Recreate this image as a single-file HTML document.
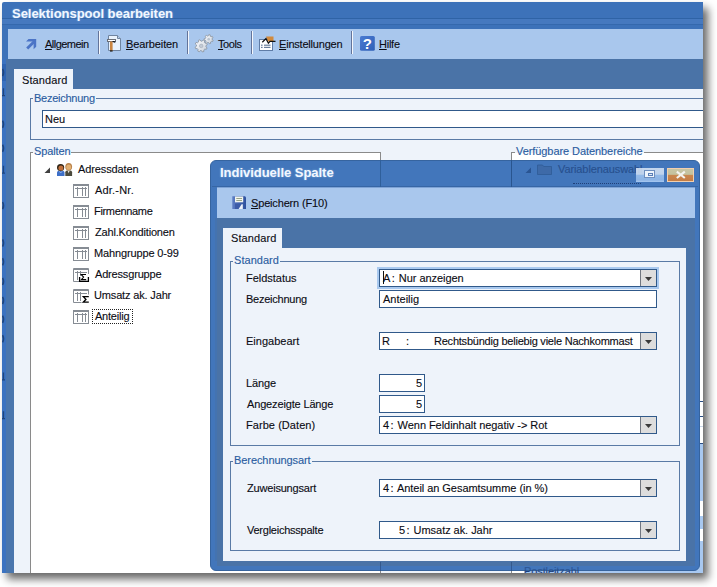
<!DOCTYPE html>
<html><head><meta charset="utf-8">
<style>
*{margin:0;padding:0;box-sizing:border-box}
html,body{width:717px;height:587px;overflow:hidden;background:#fff;position:relative}
body{font-family:"Liberation Sans",sans-serif;font-size:11px;color:#111}
.a{position:absolute}
.t{position:absolute;font:11px/13px "Liberation Sans",sans-serif;white-space:nowrap;color:#0c0c14;-webkit-text-stroke:0.12px currentColor}
.tb{position:absolute;font:bold 13px/15px "Liberation Sans",sans-serif;white-space:nowrap}
.gl{color:#2a5c9f}
.u{text-decoration:underline;text-underline-offset:1px}
.box{position:absolute;background:#fff;border:1px solid #30598a}
.dd{position:absolute;top:0;right:0;width:16px;height:16px;background:#dddddd;border-left:1px solid #707680}
.dd:after{content:"";position:absolute;left:4px;top:7px;width:7px;height:4px;background:#3a3a3a;clip-path:polygon(0 0,100% 0,50% 100%)}
.sep{position:absolute;top:31px;width:2px;height:23px;border-left:1px solid #63749a;border-right:1px solid #f4f7fc}
.lb{position:absolute;height:3px;background:#eef3fa}
</style></head><body>

<!-- main window shadow -->
<div class="a" style="left:2px;top:2px;width:701px;height:571px;background:#3d72b9;border-radius:2px 0 0 0;box-shadow:5px 6px 9px rgba(0,0,0,0.6)"></div>
<div class="a" style="left:0;top:0;width:703px;height:573px;overflow:hidden">
<!-- title band lines -->
<div class="a" style="left:2px;top:18px;width:701px;height:1px;background:#2f63a6"></div>
<div class="a" style="left:2px;top:19px;width:701px;height:5px;background:#4679bf"></div>
<div class="a" style="left:2px;top:24px;width:701px;height:1px;background:#3569ad"></div>

<!-- left strip -->
<div class="a" style="left:2px;top:59px;width:4px;height:514px;background:#3b72c0"></div>
<div class="a" style="left:6px;top:59px;width:8px;height:514px;background:#4a76ad"></div>

<svg class="a" style="left:0;top:0" width="8" height="573" viewBox="0 0 8 573"><rect x="2" y="64" width="4" height="17" fill="#2f64b2"/><path d="M2.6,68.9 Q4.6,72.5 2.6,76.1" stroke="#1f467f" stroke-width="1.5" fill="none"/><path d="M2.6,120.7 Q4.6,124.3 2.6,127.9" stroke="#1f467f" stroke-width="1.5" fill="none"/><path d="M2.6,144.6 Q4.6,148.2 2.6,151.8" stroke="#1f467f" stroke-width="1.5" fill="none"/><path d="M2.6,202.0 Q4.6,205.6 2.6,209.2" stroke="#1f467f" stroke-width="1.5" fill="none"/><path d="M2.6,239.4 Q4.6,243.0 2.6,246.6" stroke="#1f467f" stroke-width="1.5" fill="none"/><path d="M2.6,258.2 Q4.6,261.8 2.6,265.4" stroke="#1f467f" stroke-width="1.5" fill="none"/><path d="M2.6,277.8 Q4.6,281.4 2.6,285.0" stroke="#1f467f" stroke-width="1.5" fill="none"/><path d="M2.6,296.9 Q4.6,300.5 2.6,304.1" stroke="#1f467f" stroke-width="1.5" fill="none"/><path d="M2.6,315.6 Q4.6,319.2 2.6,322.8" stroke="#1f467f" stroke-width="1.5" fill="none"/><path d="M2.6,335.2 Q4.6,338.8 2.6,342.4" stroke="#1f467f" stroke-width="1.5" fill="none"/><path d="M3.5,88.2 V95.6 M2,95.6 H5" stroke="#1f467f" stroke-width="1.3" fill="none"/><path d="M3.5,165.7 V173.1 M2,173.1 H5" stroke="#1f467f" stroke-width="1.3" fill="none"/><path d="M3.5,372.5 V379.9 M2,379.9 H5" stroke="#1f467f" stroke-width="1.3" fill="none"/><path d="M3.5,411.2 V418.6 M2,418.6 H5" stroke="#1f467f" stroke-width="1.3" fill="none"/></svg>
<!-- toolbar -->
<div class="a" style="left:8px;top:29px;width:695px;height:30px;background:#a9c7ed"></div>
<!-- slate -->
<div class="a" style="left:6px;top:59px;width:697px;height:31px;background:#4a73a7"></div>

<!-- toolbar icons -->
<svg class="a" style="left:24px;top:36px" width="16" height="16" viewBox="24 36 16 16">
  <polygon points="26,41.5 28.5,39 36.2,39 36.2,46.8 33.6,49.2 33.6,41.6" fill="#4b74c6"/>
  <line x1="27.2" y1="48.6" x2="34.5" y2="41.2" stroke="#4b74c6" stroke-width="2.8"/>
</svg>
<div class="sep" style="left:98px"></div>
<svg class="a" style="left:104px;top:33px" width="20" height="20" viewBox="104 33 20 20">
  <path d="M108.5,35.5 H117.5 L120.5,38.5 V50.5 H108.5 Z" fill="#e9f2fc" stroke="#6f84a0" stroke-width="1"/>
  <path d="M117.5,35.5 V38.5 H120.5" fill="#bcd0e8" stroke="#6f84a0" stroke-width="1"/>
  <rect x="107.5" y="39.5" width="8" height="2" fill="#fff" stroke="#6b6f78" stroke-width="1"/>
  <rect x="110" y="41.5" width="2.6" height="9.5" fill="#c9843f"/>
  <path d="M112.6,41.8 q1.5,-0.8 2.6,0.6" stroke="#111" stroke-width="1.2" fill="none"/>
  <rect x="110" y="50.2" width="2.6" height="1.4" fill="#222"/>
</svg>
<div class="sep" style="left:187px"></div>
<svg class="a" style="left:192px;top:33px" width="22" height="20" viewBox="192 33 22 20">
  <defs><linearGradient id="gg" x1="0" y1="0" x2="1" y2="1"><stop offset="0" stop-color="#fbfcfe"/><stop offset="1" stop-color="#c9d0da"/></linearGradient></defs>
  <path d="M212.08,39.54 L213.17,40.27 L212.62,41.60 L211.34,41.35 L210.54,42.06 L210.65,43.36 L209.27,43.76 L208.67,42.60 L207.62,42.42 L206.66,43.32 L205.49,42.49 L206.02,41.29 L205.50,40.36 L204.21,40.18 L204.12,38.74 L205.39,38.41 L205.80,37.43 L205.13,36.30 L206.21,35.34 L207.26,36.12 L208.28,35.83 L208.75,34.60 L210.17,34.84 L210.21,36.15 L211.07,36.77 L212.33,36.37 L213.02,37.63 L212.02,38.48 Z" fill="url(#gg)" stroke="#8a939e" stroke-width="0.8"/>
  <circle cx="208.7" cy="39.2" r="1.3" fill="#b8c2ce"/>
  <path d="M205.90,46.85 L207.09,47.84 L206.34,49.36 L204.84,49.03 L203.85,49.90 L203.99,51.43 L202.39,51.99 L201.56,50.69 L200.25,50.60 L199.26,51.79 L197.74,51.04 L198.07,49.54 L197.20,48.55 L195.67,48.69 L195.11,47.09 L196.41,46.26 L196.50,44.95 L195.31,43.96 L196.06,42.44 L197.56,42.77 L198.55,41.90 L198.41,40.37 L200.01,39.81 L200.84,41.11 L202.15,41.20 L203.14,40.01 L204.66,40.76 L204.33,42.26 L205.20,43.25 L206.73,43.11 L207.29,44.71 L205.99,45.54 Z" fill="url(#gg)" stroke="#8a939e" stroke-width="0.8"/>
  <circle cx="201.2" cy="45.9" r="1.8" fill="#c2cad5" stroke="#9aa3ae" stroke-width="0.5"/>
</svg>
<div class="sep" style="left:251px"></div>
<svg class="a" style="left:257px;top:33px" width="20" height="20" viewBox="257 33 20 20">
  <rect x="259.5" y="39.5" width="13" height="11" fill="#fff" stroke="#5f7ca6" stroke-width="1"/>
  <rect x="261" y="44.6" width="1.6" height="1.2" fill="#6a7f9c"/><rect x="264" y="44.6" width="6.5" height="1.2" fill="#6a7f9c"/>
  <rect x="261" y="46.8" width="1.6" height="1.2" fill="#6a7f9c"/><rect x="264" y="46.8" width="6.5" height="1.2" fill="#6a7f9c"/>
  <path d="M266,36.5 H273.5 V41.5 H268 Z" fill="#d18a3e"/>
  <path d="M262.3,42.2 L266,38.6 L268.4,43.2 L270,41.4 H275.5" stroke="#111" stroke-width="1.2" fill="none"/>
</svg>
<div class="sep" style="left:351px"></div>
<svg class="a" style="left:359px;top:35px" width="17" height="17" viewBox="359 35 17 17">
  <defs><linearGradient id="hq" x1="0" y1="0" x2="1" y2="1"><stop offset="0" stop-color="#4a7bd2"/><stop offset="1" stop-color="#2f5fb6"/></linearGradient></defs><rect x="360" y="36" width="14.8" height="14.8" rx="1.5" fill="url(#hq)"/>
  <text x="367.4" y="48.9" font-family="Liberation Sans" font-weight="bold" font-size="15" fill="#fff" text-anchor="middle">?</text>
</svg>

<!-- main tab + content -->
<div class="a" style="left:14px;top:69px;width:59px;height:21px;background:#eef3fa"></div>
<div class="a" style="left:14px;top:89px;width:689px;height:484px;background:#eef3fa"></div>

<!-- Bezeichnung group -->
<div class="a" style="left:30px;top:98px;width:690px;height:42px;border:1px solid #5a7aa5;border-right:none"></div>
<div class="lb" style="left:33px;top:97px;width:63px"></div>
<div class="box" style="left:42px;top:110px;width:670px;height:18px"></div>

<!-- Spalten group -->
<div class="a" style="left:30px;top:152px;width:351px;height:430px;background:#fff;border:1px solid #8a8a8a"></div>
<div class="lb" style="left:33px;top:152px;width:38px;height:1px"></div>

<!-- Verfuegbare group -->
<div class="a" style="left:511px;top:152px;width:200px;height:430px;background:#fff;border:1px solid #8a8a8a;border-right:none"></div>
<div class="lb" style="left:515px;top:152px;width:129px;height:1px"></div>

<!-- tree -->
<svg class="a" style="left:43px;top:165px" width="9" height="9" viewBox="43 165 9 9"><polygon points="44.5,173 50,173 50,167.5" fill="#404040"/></svg>
<svg class="a" style="left:56px;top:162px" width="17" height="15" viewBox="56 162 17 15">
  <path d="M65.3,176 V172.3 Q65.3,170.3 68.7,170.3 Q72.1,170.3 72.1,172.3 V176 Z" fill="#4b4a3d"/>
  <path d="M67.6,170.6 L68.6,173.2 L69.8,170.6 Z" fill="#e8e8e0"/>
  <ellipse cx="68.7" cy="166.7" rx="3.4" ry="3.8" fill="#b9824a"/>
  <ellipse cx="68.7" cy="167.2" rx="2.4" ry="2.6" fill="#e2b173"/>
  <path d="M57,176 V172.6 Q57,170.6 60.7,170.6 Q64.5,170.6 64.5,172.6 V176 Z" fill="#3e6fc8"/>
  <path d="M59.3,171.2 L60.7,173 L62.2,171.2" stroke="#9cc0f0" stroke-width="0.8" fill="none"/>
  <ellipse cx="60.6" cy="167.4" rx="3.6" ry="3.5" fill="#2e2416"/>
  <ellipse cx="60.9" cy="168" rx="2.5" ry="2.6" fill="#c0703c"/>
</svg>
<svg class="a" style="left:73px;top:184px" width="17" height="15" viewBox="0 0 17 15"><rect x="0.5" y="0.5" width="15" height="13" fill="#fff" stroke="#868c94"/><rect x="1" y="1" width="14" height="1" fill="#868c94"/><path d="M2,4.5 H14 M4.5,3 V12 M9.5,3 V12 M12.5,3 V12" stroke="#868c94"/></svg>
<svg class="a" style="left:73px;top:205px" width="17" height="15" viewBox="0 0 17 15"><rect x="0.5" y="0.5" width="15" height="13" fill="#fff" stroke="#868c94"/><rect x="1" y="1" width="14" height="1" fill="#868c94"/><path d="M2,4.5 H14 M4.5,3 V12 M9.5,3 V12 M12.5,3 V12" stroke="#868c94"/></svg>
<svg class="a" style="left:73px;top:226px" width="17" height="15" viewBox="0 0 17 15"><rect x="0.5" y="0.5" width="15" height="13" fill="#fff" stroke="#868c94"/><rect x="1" y="1" width="14" height="1" fill="#868c94"/><path d="M2,4.5 H14 M4.5,3 V12 M9.5,3 V12 M12.5,3 V12" stroke="#868c94"/></svg>
<svg class="a" style="left:73px;top:247px" width="17" height="15" viewBox="0 0 17 15"><rect x="0.5" y="0.5" width="15" height="13" fill="#fff" stroke="#868c94"/><rect x="1" y="1" width="14" height="1" fill="#868c94"/><path d="M2,4.5 H14 M4.5,3 V12 M9.5,3 V12 M12.5,3 V12" stroke="#868c94"/></svg>
<svg class="a" style="left:73px;top:268px" width="17" height="15" viewBox="0 0 17 15"><rect x="0" y="0" width="16" height="14" fill="#fff"/><path d="M0.5,0.5 H15.5 V6 M0.5,0.5 V13.5 H6" stroke="#868c94" fill="none"/><rect x="1" y="1" width="14" height="1" fill="#868c94"/><path d="M2,4.5 H14 M4.5,3 V12 M7.5,3 V8" stroke="#868c94"/><path d="M6.6,9 V13.4 H15.4 V9" stroke="#000" stroke-width="1.3" fill="none"/><path d="M13,6.5 H8.2 L10.6,9.1 L8.4,11.6 H13.2" stroke="#000" stroke-width="1.1" fill="none"/></svg>
<svg class="a" style="left:73px;top:289px" width="17" height="15" viewBox="0 0 17 15"><rect x="0" y="0" width="16" height="14" fill="#fff"/><path d="M0.5,0.5 H15.5 V5.5 M0.5,0.5 V13.5 H8.5" stroke="#868c94" fill="none"/><rect x="1" y="1" width="14" height="1" fill="#868c94"/><path d="M2,4.5 H14 M4.5,3 V12 M7.5,3 V12" stroke="#868c94"/><path d="M15.8,7.6 H10.4 L12.9,10.4 L10.4,13.1 H15.8" stroke="#000" stroke-width="1.4" fill="none"/></svg>
<svg class="a" style="left:73px;top:310px" width="17" height="15" viewBox="0 0 17 15"><rect x="0.5" y="0.5" width="15" height="13" fill="#fff" stroke="#868c94"/><rect x="1" y="1" width="14" height="1" fill="#868c94"/><path d="M2,4.5 H14 M4.5,3 V12 M9.5,3 V12 M12.5,3 V12" stroke="#868c94"/></svg>
<div class="a" style="left:92px;top:309px;width:41px;height:15px;border:1px dotted #222"></div>

<div class="a" style="left:695px;top:401px;width:8px;height:1px;background:#2a4f86"></div>
<div class="a" style="left:695px;top:416px;width:8px;height:1px;background:#2a4f86"></div>
<div class="a" style="left:695px;top:426px;width:8px;height:1px;background:#c9d6e8"></div>
<div class="a" style="left:695px;top:443px;width:8px;height:1px;background:#2a4f86"></div>
<div class="a" style="left:695px;top:444px;width:8px;height:57px;background:#a8c8f0"></div>
<div class="a" style="left:695px;top:516px;width:8px;height:13px;background:#a8c8f0"></div>
<div class="a" style="left:695px;top:541px;width:8px;height:32px;background:#a8c8f0"></div>
<div class="a" style="left:524px;top:556px;width:179px;height:17px;background:#a8c8f0"></div>
<div class="t" style="left:524px;top:565px;color:#1b3f7c;letter-spacing:-0.1px">Postleitzahl</div>
<div class="tb" style="left:12px;top:6px;letter-spacing:-0.033px;color:#f2f7ff;text-shadow:0 0 2px rgba(190,230,255,.55)">Selektionspool bearbeiten</div>
<div class="t" style="left:45px;top:38px;letter-spacing:-0.537px;"><span class="u">A</span>llgemein</div>
<div class="t" style="left:126px;top:38px;letter-spacing:-0.111px;"><span class="u">B</span>earbeiten</div>
<div class="t" style="left:218px;top:38px;letter-spacing:-0.400px;"><span class="u">T</span>ools</div>
<div class="t" style="left:279px;top:38px;letter-spacing:-0.208px;"><span class="u">E</span>instellungen</div>
<div class="t" style="left:379px;top:38px;letter-spacing:-0.250px;"><span class="u">H</span>ilfe</div>
<div class="t" style="left:22px;top:74px;letter-spacing:0.100px;">Standard</div>
<div class="t gl" style="left:34px;top:92px;letter-spacing:-0.260px;">Bezeichnung</div>
<div class="t" style="left:45px;top:113px;letter-spacing:0.000px;">Neu</div>
<div class="t gl" style="left:34px;top:145px;letter-spacing:-0.117px;">Spalten</div>
<div class="t gl" style="left:516px;top:145px;letter-spacing:-0.074px;">Verfügbare Datenbereiche</div>
<div class="t" style="left:78px;top:163px;letter-spacing:-0.120px;">Adressdaten</div>
<div class="t" style="left:95px;top:184px;letter-spacing:0.200px;">Adr.-Nr.</div>
<div class="t" style="left:94px;top:205px;letter-spacing:-0.333px;">Firmenname</div>
<div class="t" style="left:95px;top:226px;letter-spacing:-0.180px;">Zahl.Konditionen</div>
<div class="t" style="left:94px;top:247px;letter-spacing:-0.136px;">Mahngruppe 0-99</div>
<div class="t" style="left:95px;top:268px;letter-spacing:-0.173px;">Adressgruppe</div>
<div class="t" style="left:94px;top:289px;letter-spacing:-0.157px;">Umsatz ak. Jahr</div>
<div class="t" style="left:95px;top:310px;letter-spacing:-0.214px;">Anteilig</div>
</div>

<!-- dialog -->
<div class="a" style="left:210px;top:160px;width:490px;height:411px;background:#4276bb;border-radius:6px;border:1px solid #36649f"></div>
<div class="a" style="left:215px;top:218px;width:2px;height:343px;background:#4473b0"></div>
<div class="a" style="left:212px;top:186px;width:486px;height:1px;background:#3766a5"></div>
<!-- see-through items in dialog title bar -->
<div class="a" style="left:380px;top:160px;width:1px;height:27px;background:#2f5f9a"></div>
<div class="a" style="left:511px;top:160px;width:1px;height:27px;background:#29558f"></div>
<svg class="a" style="left:524px;top:162px" width="30" height="15" viewBox="524 162 30 15">
  <polygon points="525.5,173 531,173 531,167.5" fill="#2a5592"/>
  <path d="M537.5,165 h5 l1.2,1.5 h7.8 v8 h-14 z" fill="#3e6aa8" stroke="#2f5a96" stroke-width="0.8"/>
</svg>
<div class="t" style="left:558px;top:163px;color:#27508e;letter-spacing:-0.1px">Variablenauswahl</div>
<div class="a" style="left:573px;top:183px;width:68px;height:1px;border-top:1px dotted #1f3f78"></div>
<!-- caption buttons -->
<div class="a" style="left:636px;top:168px;width:28px;height:14px;background:linear-gradient(rgba(226,236,249,.82) 0,rgba(212,227,246,.85) 45%,#94bbe9 50%,#8db4e6 85%,#a9c9f0 100%)"></div>
<div class="a" style="left:644px;top:170px;width:11px;height:8px;border:1px solid #6e8fbf;background:#eef4fc"></div>
<div class="a" style="left:648px;top:173px;width:5px;height:3px;border:1px solid #5a7fb8;background:#dfe9f6"></div>
<div class="a" style="left:667px;top:168px;width:27px;height:14px;border:1px solid #f2cfae;background:linear-gradient(#c8c6a4 0,#c4c29e 45%,#c9874f 50%,#c47d45 100%)"></div>
<svg class="a" style="left:675px;top:170px" width="12" height="10" viewBox="0 0 12 10"><path d="M1.8,1.6 L9.8,8 M9.8,1.6 L1.8,8" stroke="#f4f4f0" stroke-width="2.1"/></svg>
<div class="a" style="left:217px;top:187px;width:478px;height:1px;background:#7ea3d6"></div><div class="a" style="left:217px;top:188px;width:478px;height:30px;background:#a9c7ed"></div>
<div class="a" style="left:217px;top:218px;width:478px;height:348px;background:#4a73a7"></div>
<svg class="a" style="left:231px;top:195px" width="16" height="15" viewBox="231 195 16 15">
  <defs><linearGradient id="fl" x1="0" y1="0" x2="1" y2="0"><stop offset="0" stop-color="#5d7ec4"/><stop offset="1" stop-color="#2d509e"/></linearGradient></defs>
  <path d="M232.3,196.2 H245 L246,197.2 V209 H232.3 Z" fill="url(#fl)"/>
  <rect x="235" y="196.5" width="8.2" height="5.8" fill="#f3f5ee"/>
  <path d="M236.3,198.5 H242 M236.3,200.5 H242" stroke="#8c9a7c" stroke-width="0.9"/>
  <rect x="235" y="203.5" width="8" height="5.5" fill="#3c5ca8"/>
  <path d="M238.6,209 L241.6,204.3 H242.8 V209 Z" fill="#eef3fb"/>
</svg>

<!-- dialog tab + content -->
<div class="a" style="left:223px;top:228px;width:59px;height:21px;background:#eef3fa"></div>
<div class="a" style="left:223px;top:248px;width:463px;height:313px;background:#eef3fa"></div>

<!-- group Standard -->
<div class="a" style="left:230px;top:261px;width:450px;height:185px;border:1px solid #5a7aa5"></div>
<div class="lb" style="left:233px;top:260px;width:47px"></div>
<div class="box" style="left:379px;top:269px;width:278px;height:18px;box-shadow:0 0 0 2px #a9c9ef"><div class="dd"></div></div>
<div class="a" style="left:383px;top:271px;width:1px;height:13px;background:#111"></div>
<div class="box" style="left:379px;top:290px;width:278px;height:18px"></div>
<div class="box" style="left:379px;top:332px;width:278px;height:18px"><div class="dd"></div></div>
<div class="box" style="left:379px;top:374px;width:46px;height:18px"></div>
<div class="box" style="left:379px;top:395px;width:46px;height:18px"></div>
<div class="box" style="left:379px;top:416px;width:278px;height:18px"><div class="dd"></div></div>

<!-- group Berechnungsart -->
<div class="a" style="left:230px;top:461px;width:450px;height:90px;border:1px solid #5a7aa5"></div>
<div class="lb" style="left:233px;top:460px;width:79px"></div>
<div class="box" style="left:379px;top:479px;width:278px;height:18px"><div class="dd"></div></div>
<div class="box" style="left:379px;top:521px;width:278px;height:18px"><div class="dd"></div></div>

<div class="tb" style="left:220px;top:165px;letter-spacing:-0.028px;color:#f2f7ff;text-shadow:0 0 2px rgba(190,230,255,.55)">Individuelle Spalte</div>
<div class="t" style="left:251px;top:197px;letter-spacing:-0.164px;"><span class="u">S</span>peichern (F10)</div>
<div class="t" style="left:231px;top:232px;letter-spacing:0.100px;">Standard</div>
<div class="t gl" style="left:234px;top:254px;letter-spacing:0.043px;">Standard</div>
<div class="t" style="left:246px;top:272px;letter-spacing:-0.022px;">Feldstatus</div>
<div class="t" style="left:246px;top:293px;letter-spacing:-0.240px;">Bezeichnung</div>
<div class="t" style="left:246px;top:335px;letter-spacing:0.011px;">Eingabeart</div>
<div class="t" style="left:246px;top:377px;letter-spacing:-0.100px;">Länge</div>
<div class="t" style="left:247px;top:398px;letter-spacing:-0.153px;">Angezeigte Länge</div>
<div class="t" style="left:246px;top:419px;letter-spacing:0.058px;">Farbe (Daten)</div>
<div class="t gl" style="left:234px;top:454px;letter-spacing:-0.077px;">Berechnungsart</div>
<div class="t" style="left:247px;top:482px;letter-spacing:-0.192px;">Zuweisungsart</div>
<div class="t" style="left:247px;top:524px;letter-spacing:-0.240px;">Vergleichsspalte</div>
<div class="t" style="left:383px;top:272px;letter-spacing:-0.05px;">A<span style="margin-left:1.5px">:</span><span style="margin-left:1px"> </span>Nur anzeigen</div>
<div class="t" style="left:383px;top:293px;letter-spacing:0.000px;">Anteilig</div>
<div class="t" style="left:382px;top:335px;letter-spacing:0.000px;">R</div>
<div class="t" style="left:406px;top:335px;letter-spacing:0.000px;">:</div>
<div class="t" style="left:434px;top:335px;letter-spacing:-0.224px;">Rechtsbündig beliebig viele Nachkommast</div>
<div class="t" style="left:383px;top:419px;letter-spacing:-0.05px;">4<span style="margin-left:1.5px">:</span><span style="margin-left:1px"> </span>Wenn Feldinhalt negativ -&gt; Rot</div>
<div class="t" style="left:383px;top:482px;letter-spacing:-0.05px;">4<span style="margin-left:1.5px">:</span><span style="margin-left:1px"> </span>Anteil an Gesamtsumme (in %)</div>
<div class="t" style="left:399px;top:524px;letter-spacing:-0.05px;">5<span style="margin-left:1.5px">:</span><span style="margin-left:1px"> </span>Umsatz ak. Jahr</div>
<div class="a" style="left:210px;top:562px;width:490px;height:9px;overflow:hidden;opacity:.45">
<div class="a" style="left:170px;top:0;width:1px;height:9px;background:#1d3a6a"></div>
<div class="a" style="left:301px;top:0;width:1px;height:9px;background:#1d3a6a"></div>
<div class="t" style="left:314px;top:3px;color:#10306a;letter-spacing:-0.1px">Postleitzahl</div>
</div>

<div class="t" style="left:416px;top:377px">5</div>
<div class="t" style="left:416px;top:398px">5</div>
</body></html>
